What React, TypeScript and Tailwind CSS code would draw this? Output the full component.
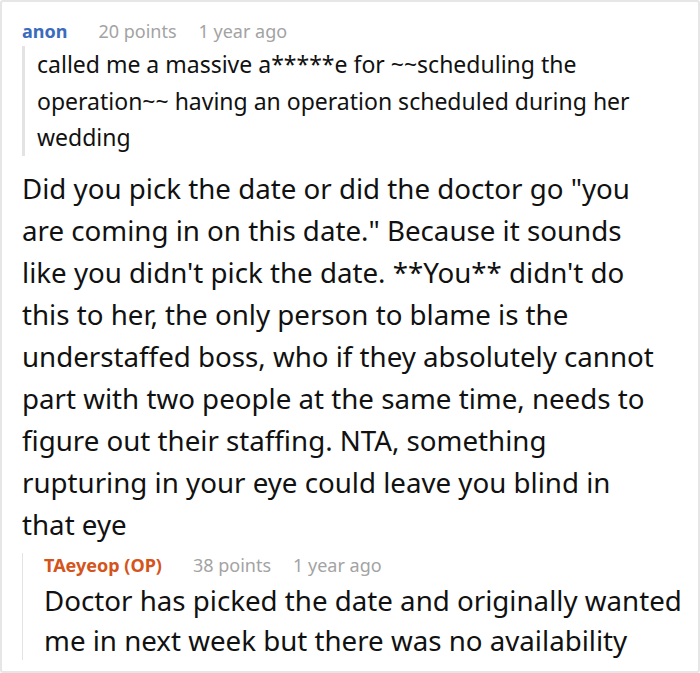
import React from 'react';

const font = { fontFamily: '"Noto Sans", "Open Sans", sans-serif' };

const Meta: React.FC<{ name: string; nameClass: string; points: string; time: string }> = ({ name, nameClass, points, time }) => (
  <div className="flex items-center text-[18px] leading-[24px]">
    <span className={`font-bold ${nameClass}`}>{name}</span>
    <span className="ml-[31px] text-[#a3a3a3]">{points}</span>
    <span className="ml-[22px] text-[#a3a3a3]">{time}</span>
  </div>
);

export default function App() {
  return (
    <div style={font} className="w-[700px] h-[673px] bg-white border-2 border-[#e6e6e6] rounded-[3px] overflow-hidden">
      <div className="pl-5 pt-[17px]">
        <Meta name="anon" nameClass="text-[#3b6bbd]" points="20 points" time="1 year ago" />

        <div className="mt-[3px] w-[640px] border-l-[3px] border-[#e3e3e3] pl-[12px] text-[23px] leading-[36.5px] text-[#111]">
          called me a massive a*****e for ~~scheduling the operation~~ having an operation scheduled during her wedding
        </div>

        <p className="mt-[11px] w-[640px] text-[27.7px] leading-[42px] text-[#111]">
          Did you pick the date or did the doctor go "you are coming in on this date." Because it sounds like you didn't pick
          the date. **You** didn't do this to her, the only person to blame is the understaffed boss, who if they absolutely
          cannot part with two people at the same time, needs to figure out their staffing. NTA, something rupturing in your
          eye could leave you blind in that eye
        </p>

        <div className="mt-[8px] border-l border-[#e3e3e3] pl-[21px]">
          <Meta name="TAeyeop (OP)" nameClass="text-[#d4541c]" points="38 points" time="1 year ago" />
          <p className="mt-[3px] w-[650px] text-[27.7px] leading-[40px] text-[#111]">
            Doctor has picked the date and originally wanted me in next week but there was no availability
          </p>
        </div>
      </div>
    </div>
  );
}
